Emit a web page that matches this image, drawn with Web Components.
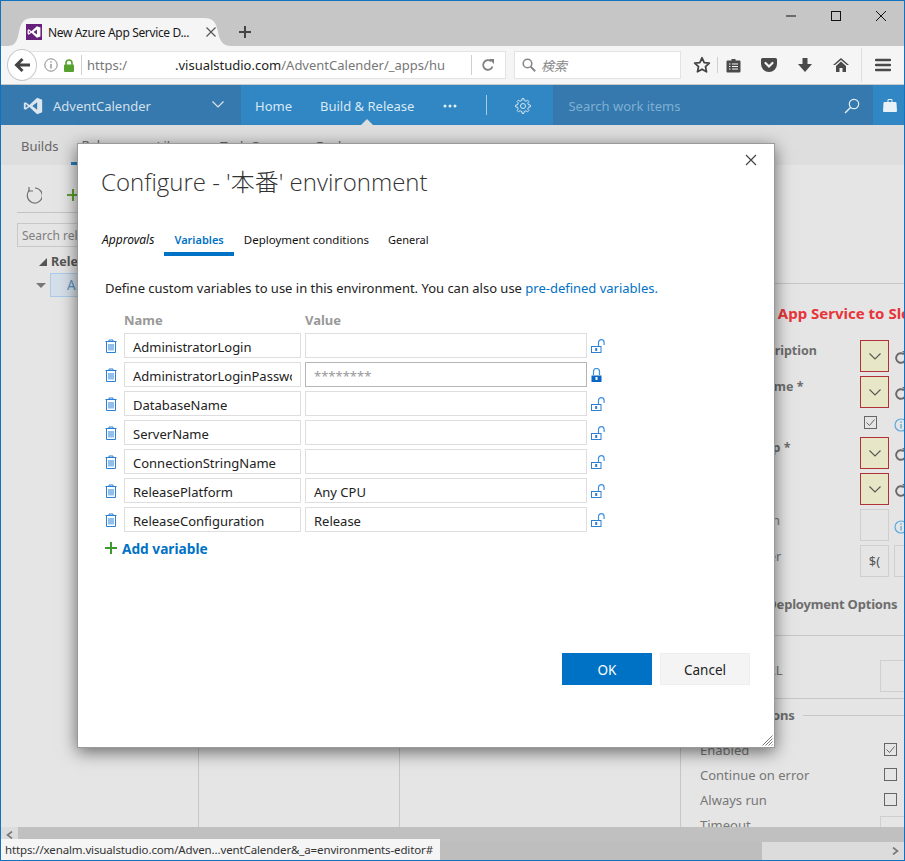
<!DOCTYPE html>
<html>
<head>
<meta charset="utf-8">
<title>Configure environment</title>
<style>
	html, body { margin: 0; padding: 0; overflow: hidden; }
	body { font-family: "Noto Sans", "Noto Sans CJK JP", sans-serif; }
</style>
</head>
<body>
<app-window>
	<browser-bar></browser-bar>
	<vsts-nav></vsts-nav>
	<vsts-subnav></vsts-subnav>
	<page-body></page-body>
	<page-scrollbars></page-scrollbars>
	<config-dialog>
		<var-row><span slot="name">AdministratorLogin</span></var-row>
		<var-row secret><span slot="name">AdministratorLoginPassword</span><span slot="value">********</span></var-row>
		<var-row><span slot="name">DatabaseName</span></var-row>
		<var-row><span slot="name">ServerName</span></var-row>
		<var-row><span slot="name">ConnectionStringName</span></var-row>
		<var-row><span slot="name">ReleasePlatform</span><span slot="value">Any CPU</span></var-row>
		<var-row><span slot="name">ReleaseConfiguration</span><span slot="value">Release</span></var-row>
	</config-dialog>
	<status-tip>https://xenalm.visualstudio.com/Adven...ventCalender&amp;_a=environments-editor#</status-tip>
</app-window>

<script>
const VS_LOGO = 'M17 2 7.6 10.8 3.2 7.4 1 8.5v7l2.2 1.1 4.4-3.4L17 22l6-2.4V4.4zM17 7.6v8.8L11.2 12zM3.2 9.7 6 12l-2.8 2.3z';

// outline of a cog, used for the settings button
function gearPath(cx, cy, outer, inner, teeth) {
	let d = '';
	const step = Math.PI * 2 / teeth;
	for (let i = 0; i < teeth; i++) {
		const a = i * step;
		const pts = [[inner, a - step * .5], [inner, a - step * .27], [outer, a - step * .17], [outer, a + step * .17], [inner, a + step * .27]];
		pts.forEach(([r, t], n) => {
			d += (i === 0 && n === 0 ? 'M' : 'L') + (cx + r * Math.cos(t)).toFixed(2) + ' ' + (cy + r * Math.sin(t)).toFixed(2);
		});
	}
	return d + 'Z';
}

class Shadowed extends HTMLElement {
	connectedCallback() {
		const shadow = this.attachShadow({ mode: 'open' });
		shadow.innerHTML = this.markup();
	}
}

class AppWindow extends Shadowed {
	markup() {
		return `
			<style>
				:host {
					display: flex; flex-direction: column; position: relative;
					width: 905px; height: 861px; box-sizing: border-box;
					border: 1px solid #1372bd; overflow: hidden; background: #e5e5e5;
					font-family: "Noto Sans", "Noto Sans CJK JP", sans-serif;
				}
			</style>
			<slot></slot>
		`;
	}
}

class BrowserBar extends Shadowed {
	markup() {
		return `
			<style>
				:host { display: block; flex: none; }
				.strip { height: 45px; background: #c6c6c6; display: flex; padding-left: 6px; box-sizing: border-box; }
				.tab { position: relative; width: 225px; height: 28px; margin-top: 17px; display: flex; align-items: center; padding-left: 19px; box-sizing: border-box; color: #1a1a1a; font-size: 12px; flex: none; }
				.tab > svg.shape { position: absolute; left: 0; top: 0; }
				.tab > * { position: relative; }
				.favicon { width: 16px; height: 16px; background: #68217a; display: flex; align-items: center; justify-content: center; margin-right: 6px; flex: none; }
				.title { width: 156px; white-space: nowrap; overflow: hidden; letter-spacing: -.35px; }
				.tab-x { margin-left: 1px; }
				.plus { margin: 17px 0 0 0; width: 26px; height: 28px; display: flex; align-items: center; justify-content: center; }
				.controls { margin-left: auto; margin-right: 1px; display: flex; height: 30px; }
				.controls div { width: 45px; display: flex; align-items: center; justify-content: center; }
				.tools { height: 39px; background: #f5f5f5; border-bottom: 1px solid #c9c9c9; box-sizing: border-box; display: flex; align-items: center; position: relative; color: #555; }
				.back { position: absolute; left: 6px; top: 3px; width: 30px; height: 32px; border-radius: 50%; border: 1px solid #c8c8c8; background: #fff; box-sizing: border-box; display: flex; align-items: center; justify-content: center; }
				.url { margin-left: 29px; width: 476px; height: 28px; flex: none; background: #fff; border: 1px solid #e3e3e3; box-sizing: border-box; display: flex; align-items: center; padding-left: 13px; font-size: 13px; color: #777; white-space: nowrap; }
				.url b { font-weight: 400; color: #222; margin-left: 48px; }
				.sep { width: 1px; height: 20px; background: #cfcfcf; flex: none; }
				.addr { margin-left: 5px; width: 358px; flex: none; overflow: hidden; }
				.search { margin-left: 8px; width: 167px; height: 28px; flex: none; background: #fff; border: 1px solid #e3e3e3; box-sizing: border-box; display: flex; align-items: center; padding-left: 7px; color: #888; font-size: 13px; font-style: italic; }
				.search span { margin-left: 5px; }
				.icons { display: flex; align-items: center; margin-left: 3px; flex: none; }
				.cell { width: 36px; display: flex; align-items: center; justify-content: center; flex: none; }
				.icons .sep { margin: 0 -3px; height: 16px; }
				.menu { margin-left: 2px; width: 42px; height: 34px; flex: none; display: flex; align-items: center; justify-content: center; border-left: 1px solid #dedede; box-sizing: border-box; }
			</style>
			<div class="strip">
				<div class="tab">
					<svg class="shape" width="225" height="28"><path d="M0 28c8 0 10-4 12-14S17 0 26 0h171c9 0 12 4 14 14s5 14 14 14z" fill="#f5f5f5"/></svg>
					<span class="favicon"><svg width="14" height="14" viewBox="0 0 24 24"><path fill="#fff" fill-rule="evenodd" d="${VS_LOGO}"/></svg></span>
					<span class="title">New Azure App Service D...</span>
					<svg class="tab-x" width="12" height="12" viewBox="0 0 12 12"><path d="M1.5 1.5l9 9m0-9l-9 9" stroke="#555" stroke-width="1.2" fill="none"/></svg>
				</div>
				<div class="plus"><svg width="14" height="14" viewBox="0 0 14 14"><path d="M7 1v12M1 7h12" stroke="#444" stroke-width="2" fill="none"/></svg></div>
				<div class="controls">
					<div><svg width="10" height="10" viewBox="0 0 10 10"><path d="M0 5h10" stroke="#111" fill="none"/></svg></div>
					<div><svg width="10" height="10" viewBox="0 0 10 10"><rect x=".5" y=".5" width="9" height="9" stroke="#111" fill="none"/></svg></div>
					<div><svg width="10" height="10" viewBox="0 0 10 10"><path d="M0 0l10 10M10 0L0 10" stroke="#111" fill="none"/></svg></div>
				</div>
			</div>
			<div class="tools">
				<div class="url">
					<svg width="14" height="14" viewBox="0 0 14 14" style="flex:none"><circle cx="7" cy="7" r="6.2" fill="none" stroke="#888"/><path d="M7 6v4.5M7 3.2v1.500" stroke="#888" stroke-width="1.3"/></svg>
					<svg width="12" height="13" viewBox="0 0 12 13" style="margin:0 6px 0 5px;flex:none"><path d="M3 6V4a3 3 0 0 1 6 0v2" fill="none" stroke="#57a12f" stroke-width="1.6"/><rect x="1" y="5.5" width="10" height="7.5" rx="1" fill="#57a12f"/></svg>
					<span class="sep"></span>
					<div class="addr">https:/<b>.visualstudio.com</b>/AdventCalender/_apps/hu</div>
					<span class="sep" style="margin-left:26px"></span>
					<svg width="14" height="14" viewBox="0 0 14 14" style="margin-left:9px;flex:none"><path d="M11.5 8.5A4.8 4.8 0 1 1 10 3.3" fill="none" stroke="#808080" stroke-width="1.8"/><path d="M8 1h5v5z" fill="#808080"/></svg>
				</div>
				<div class="back"><svg width="16" height="16" viewBox="0 0 16 16"><path d="M8.500 2L2.500 8l6 6M3 8h13" fill="none" stroke="#444" stroke-width="3"/></svg></div>
				<div class="search">
					<svg width="14" height="14" viewBox="0 0 14 14" style="flex:none"><circle cx="5.5" cy="5.5" r="4.3" fill="none" stroke="#888" stroke-width="1.6"/><path d="M8.7 8.7l4.5 4.5" stroke="#888" stroke-width="2"/></svg>
					<span>検索</span>
				</div>
				<div class="icons">
					<div class="cell"><svg width="18" height="18" viewBox="0 0 18 18"><path d="M9 1.8l2.2 4.8 5.1.6-3.8 3.500 1 5.100L9 13.2l-4.500 2.600 1-5.100-3.800-3.500 5.100-.6z" fill="none" stroke="#444" stroke-width="1.8" stroke-linejoin="round"/></svg></div>
					<span class="sep"></span>
					<div class="cell"><svg width="15" height="15" viewBox="0 0 15 15"><path d="M1.5 2.5h12a1 1 0 0 1 1 1v10a1 1 0 0 1-1 1h-12a1 1 0 0 1-1-1v-10a1 1 0 0 1 1-1zM5.500 2.500V1h4v1.500" fill="#4a4a4a"/><path d="M3 6h1.500M6 6h6M3 8.500h1.500M6 8.500h6M3 11h1.500M6 11h6" stroke="#f5f5f5" stroke-width="1.2"/></svg></div>
					<div class="cell"><svg width="16" height="14" viewBox="0 0 16 14"><path d="M1.500 0h13A1.500 1.500 0 0 1 16 1.500V6a8 8 0 0 1-16 0V1.500A1.500 1.500 0 0 1 1.500 0z" fill="#4a4a4a"/><path d="M4.500 5L8 8.500 11.500 5" fill="none" stroke="#f5f5f5" stroke-width="2.2" stroke-linecap="round"/></svg></div>
					<div class="cell"><svg width="14" height="14" viewBox="0 0 14 14"><path d="M4.500 0h5v6H14l-7 8-7-8h4.500z" fill="#4a4a4a"/></svg></div>
					<div class="cell"><svg width="16" height="14" viewBox="0 0 16 14"><path d="M8 0L0 7h2l6-5 6 5h2z" fill="#4a4a4a"/><path d="M3 8l5-4.500L13 8v6H9.500v-4h-3v4H3z" fill="#4a4a4a"/></svg></div>
				</div>
				<div class="menu"><svg width="16" height="14" viewBox="0 0 16 14"><path d="M1 2h14M1 7h14M1 12h14" stroke="#4a4a4a" stroke-width="2.4" stroke-linecap="round"/></svg></div>
			</div>
		`;
	}
}

class VstsNav extends Shadowed {
	markup() {
		return `
			<style>
				:host { display: flex; flex: none; height: 40px; background: #3087c3; color: #d9e8f3; font-size: 13px; align-items: stretch; }
				.brand { width: 240px; background: #3579ae; display: flex; align-items: center; padding: 2px 17px 0 22px; box-sizing: border-box; flex: none; }
				.brand span { margin-left: 10px; color: #d2e0ec; }
				.brand .chev { margin-left: auto; margin-top: -3px; }
				.item { display: flex; align-items: center; position: relative; white-space: nowrap; padding-top: 2px; flex: none; }
				.item.on::after { content: ""; position: absolute; left: 50%; bottom: 0; margin-left: -6px; border: 6px solid transparent; border-top: 0; border-bottom-color: #dedede; }
				.rule { width: 1px; height: 20px; background: #a3cbe6; align-self: center; margin-left: 29px; flex: none; }
				.searchbox { margin-left: 22px; width: 320px; flex: none; background: #3579ae; display: flex; align-items: center; padding: 2px 13px 0 15px; box-sizing: border-box; color: #7fb0d2; justify-content: space-between; }
				.bag { flex: 1; display: flex; align-items: center; justify-content: center; padding-left: 3px; }
			</style>
			<div class="brand">
				<svg width="20" height="20" viewBox="0 0 24 24"><path fill="#dbe6ef" fill-rule="evenodd" d="${VS_LOGO}"/></svg>
				<span>AdventCalender</span>
				<svg class="chev" width="12" height="7" viewBox="0 0 12 7"><path d="M.5.5L6 6 11.500.5" fill="none" stroke="#dbe6ef" stroke-width="1.2"/></svg>
			</div>
			<div class="item" style="margin-left:14px">Home</div>
			<div class="item on" style="margin-left:28px">Build &amp; Release</div>
			<div class="item" style="margin-left:29px"><svg width="14" height="4" viewBox="0 0 14 4"><circle cx="2" cy="2" r="1.5" fill="#e6f0f7"/><circle cx="7" cy="2" r="1.5" fill="#e6f0f7"/><circle cx="12" cy="2" r="1.5" fill="#e6f0f7"/></svg></div>
			<div class="rule"></div>
			<div class="item" style="margin-left:28px"><svg width="16" height="16" viewBox="0 0 16 16"><path d="${gearPath(8, 8, 7.4, 5.6, 8)}" fill="none" stroke="#d9e8f3"/><circle cx="8" cy="8" r="2.5" fill="none" stroke="#d9e8f3"/></svg></div>
			<div class="searchbox">
				<span>Search work items</span>
				<svg width="16" height="16" viewBox="0 0 16 16"><circle cx="10" cy="6" r="4.7" fill="none" stroke="#e3eef6" stroke-width="1.2"/><path d="M6.500 9.500L1 15" stroke="#e3eef6" stroke-width="1.4"/></svg>
			</div>
			<div class="bag"><svg width="14" height="14" viewBox="0 0 14 14"><path d="M1.500 4h11a1 1 0 0 1 1 1l.5 8a1 1 0 0 1-1 1H1a1 1 0 0 1-1-1l.5-8a1 1 0 0 1 1-1z" fill="#e8f1f7"/><path d="M5 4V1.500h4V4" fill="none" stroke="#e8f1f7"/></svg></div>
		`;
	}
}

class VstsSubnav extends Shadowed {
	markup() {
		return `
			<style>
				:host { display: flex; flex: none; height: 40px; background: #dedede; color: #666; font-size: 13px; padding-left: 20px; box-sizing: border-box; }
				div { display: flex; align-items: center; white-space: nowrap; height: 40px; box-sizing: border-box; padding-top: 2px; margin-right: 21px; flex: none; }
				.on { margin-left: -8px; padding: 2px 10px 0; border-bottom: 3px solid #2b7cbb; margin-right: 12px; }
			</style>
			<div>Builds</div>
			<div class="on">Releases</div>
			<div>Library</div>
			<div>Task Groups</div>
			<div>Explorer</div>
		`;
	}
}

class PageBody extends Shadowed {
	markup() {
		return `
			<style>
				:host { display: flex; flex: 1; min-height: 0; overflow: hidden; }
				.col { border-right: 1px solid #c6c6c6; box-sizing: border-box; flex: none; }
				.mid { width: 201px; }
				.mid2 { width: 281px; }
			</style>
			<release-tree></release-tree>
			<div class="col mid"></div>
			<div class="col mid2"></div>
			<task-form></task-form>
		`;
	}
}

class ReleaseTree extends Shadowed {
	markup() {
		return `
			<style>
				:host { display: block; width: 198px; flex: none; box-sizing: border-box; border-right: 1px solid #c6c6c6; padding-left: 16px; color: #666; font-size: 12.5px; }
				.bar { margin-right: 8px; border-bottom: 1px solid #c4c4c4; display: flex; align-items: center; padding: 12px 0 0 7px; box-sizing: border-box; height: 48px; }
				.find { margin: 10px 7px 0 0; height: 24px; border: 1px solid #c8c8c8; box-sizing: border-box; display: flex; align-items: center; padding-left: 4px; color: #808080; font-size: 12px; white-space: nowrap; overflow: hidden; }
				.head { margin-top: 4px; height: 20px; display: flex; align-items: center; font-weight: 700; color: #555; white-space: nowrap; padding-left: 22px; position: relative; }
				.head::before { content: ""; position: absolute; left: 23px; top: 7px; border: 4px solid transparent; border-right-color: #555; border-bottom-color: #555; margin-left: -1px; }
				.head span { margin-left: 12px; }
				.row { margin: 2px 7px 0 0; display: flex; align-items: center; height: 24px; position: relative; }
				.row i { border: 5px solid transparent; border-top: 5px solid #777; border-bottom: 0; margin-left: 19px; }
				.row div { margin-left: 4px; flex: 1; height: 24px; background: #d5dfe9; border: 1px solid #a9cbe9; box-sizing: border-box; padding-left: 16px; display: flex; align-items: center; color: #5b90c0; white-space: nowrap; font-size: 13.5px; }
			</style>
			<div class="bar">
				<svg width="18" height="18" viewBox="0 0 18 18"><path d="M5.500 4.200A7.500 7.500 0 1 0 11 2" fill="none" stroke="#6e6e6e" stroke-width="1.2"/><path d="M5 1v4h4" fill="none" stroke="#6e6e6e" stroke-width="1.2"/></svg>
				<svg width="12" height="12" viewBox="0 0 12 12" style="margin-left:25px"><path d="M6 0v12M0 6h12" stroke="#5aa02c" stroke-width="2"/></svg>
			</div>
			<div class="find">Search rele</div>
			<div class="head"><span>Rele</span></div>
			<div class="row"><i></i><div>A</div></div>
		`;
	}
}

class TaskForm extends Shadowed {
	chevBox() {
		return `<div class="pick"><svg width="12" height="7" viewBox="0 0 12 7"><path d="M.5.5L6 6 11.500.5" fill="none" stroke="#555" stroke-width="1.1"/></svg></div>`;
	}
	redo() {
		return `<svg class="side" width="14" height="14" viewBox="0 0 14 14" style="margin-top:11px"><path d="M11.500 8.500A4.800 4.800 0 1 1 10 3.300" fill="none" stroke="#6a6a6a" stroke-width="1.9"/><path d="M8 0h5v5z" fill="#6a6a6a"/></svg>`;
	}
	info(top) {
		return `<svg class="side" width="14" height="14" viewBox="0 0 14 14" style="margin-top:${top}px"><circle cx="7" cy="7" r="6" fill="none" stroke="#5aa9dc" stroke-width="1.2"/><path d="M7 6v4.500M7 3.300v1.500" stroke="#5aa9dc" stroke-width="1.3"/></svg>`;
	}
	markup() {
		const ticked = `<svg width="13" height="13" viewBox="0 0 13 13"><rect x=".5" y=".5" width="12" height="12" fill="none" stroke="#666"/><path d="M2.500 6.500l3 3 5-6" fill="none" stroke="#666"/></svg>`;
		return `
			<style>
				:host { display: block; flex: 1; min-width: 0; overflow: hidden; padding-top: 118px; color: #777; font-size: 13px; white-space: nowrap; }
				hr { border: 0; border-top: 1px solid #c6c6c6; margin: 0; }
				h2 { margin: 17px 0 15px 50px; font-size: 15px; line-height: 24px; color: #e8343a; font-weight: 700; }
				.grid { display: grid; grid-template-columns: 179px 29px 30px; grid-template-rows: 32px 32px 21px 32px 32px 32px 32px; row-gap: 4px; }
				.l { padding: 1px 0 0 19px; line-height: 20px; }
				.b { font-weight: 700; color: #6d6d6d; font-size: 12.5px; }
				.pick { box-sizing: border-box; height: 32px; background: #e7e7c7; border: 1px solid #b13236; display: flex; align-items: center; justify-content: center; }
				.empty { box-sizing: border-box; height: 32px; border: 1px solid #cfcfcf; display: flex; align-items: center; justify-content: center; color: #555; font-size: 13px; }
				.cellside { display: flex; padding-left: 5px; gap: 4px; }
				.check { margin-left: 4px; align-self: center; display: flex; }
				h3 { margin: 17px 0 0 18px; font-size: 13px; letter-spacing: -.2px; line-height: 20px; color: #6d6d6d; font-weight: 700; }
				.url { display: flex; margin-top: 24px; height: 32px; padding-left: 19px; }
				.url span { line-height: 20px; }
				.url div { margin-left: auto; width: 24px; box-sizing: border-box; border: 1px solid #cfcfcf; border-right: 0; }
				.ctrl { display: flex; align-items: center; margin-top: 6px; }
				.ctrl h3 { margin: 0 8px 0 14px; }
				.ctrl i { flex: 1; border-top: 1px solid #c6c6c6; }
				.opts { margin-top: 12px; display: flex; flex-direction: column; }
				.opt { display: flex; align-items: center; height: 25px; padding: 0 7px 0 19px; flex: none; justify-content: space-between; }
				.box { width: 13px; height: 13px; border: 1px solid #666; box-sizing: border-box; display: block; }
				.time div { width: 24px; height: 24px; margin-right: -7px; border: 1px solid #cfcfcf; border-right: 0; box-sizing: border-box; margin-top: 6px; }
			</style>
			<hr>
			<h2>Azure App Service to Slot</h2>
			<div class="grid">
				<div class="l b">Azure Subscription</div>${this.chevBox()}<div class="cellside">${this.redo()}</div>
				<div class="l b">Web App name *</div>${this.chevBox()}<div class="cellside">${this.redo()}</div>
				<div class="l">To slot</div>
				<div class="check">${ticked}</div>
				<div class="cellside">${this.info(6)}</div>
				<div class="l b">Server group *</div>${this.chevBox()}<div class="cellside">${this.redo()}</div>
				<div class="l b">Slot *</div>${this.chevBox()}<div class="cellside">${this.redo()}</div>
				<div class="l">Path location</div><div class="empty"></div><div class="cellside">${this.info(11)}</div>
				<div class="l">Source folder</div><div class="empty">$(</div><div class="cellside"><div class="empty" style="width:30px"></div></div>
			</div>
			<h3>Additional Deployment Options</h3>
			<hr style="margin-top:21px">
			<div class="url"><span>Web App URL</span><div></div></div>
			<hr style="margin-top:6px">
			<div class="ctrl"><h3>Control Options</h3><i></i></div>
			<div class="opts">
				<div class="opt"><span>Enabled</span>${ticked}</div>
				<div class="opt"><span>Continue on error</span><span class="box"></span></div>
				<div class="opt"><span>Always run</span><span class="box"></span></div>
				<div class="opt time"><span>Timeout</span><div></div></div>
			</div>
		`;
	}
}

class PageScrollbars extends Shadowed {
	markup() {
		return `
			<style>
				:host { display: block; flex: none; }
				.one { height: 15px; background: #c0c0c0; display: flex; }
				.arrow { width: 17px; background: #dcdcdc; display: flex; align-items: center; justify-content: center; }
				.two { height: 18px; background: #dcdcdc; display: flex; align-items: center; }
				.thumb { width: 761px; height: 100%; background: #bebebe; }
				.two svg { margin-left: auto; margin-right: 5px; }
			</style>
			<div class="one"><div class="arrow"><svg width="7" height="8" viewBox="0 0 7 8"><path d="M6 .5L1.500 4 6 7.500" fill="none" stroke="#777" stroke-width="1.6"/></svg></div></div>
			<div class="two"><div class="thumb"></div><svg width="7" height="8" viewBox="0 0 7 8"><path d="M1 .5L5.500 4 1 7.500" fill="none" stroke="#777" stroke-width="1.6"/></svg></div>
		`;
	}
}

class StatusTip extends Shadowed {
	markup() {
		return `
			<style>
				:host { position: absolute; left: 0; bottom: 0; width: 439px; height: 21px; background: #f5f5f5; color: #333; font-size: 11.5px; letter-spacing: -.13px; padding-left: 4px; box-sizing: border-box; display: flex; align-items: center; white-space: nowrap; overflow: hidden; }
			</style>
			<slot></slot>
		`;
	}
}

class ConfigDialog extends Shadowed {
	markup() {
		return `
			<style>
				:host {
					position: absolute; left: 76px; top: 142px; width: 698px; height: 605px;
					background: #fff; border: 1px solid #9a9a9a; box-sizing: border-box;
					box-shadow: 0 4px 16px rgba(0, 0, 0, .55);
					display: flex; flex-direction: column; color: #222;
				}
				.close { position: absolute; top: 10px; right: 17px; width: 12px; height: 12px; }
				h1 { margin: 20px 0 0 23px; font-size: 24px; line-height: 36px; font-weight: 300; color: #333; white-space: nowrap; font-family: "Open Sans", "Noto Sans CJK JP", sans-serif; }
				.tabs { display: flex; margin: 26px 0 0 14px; height: 30px; font-size: 11.5px; color: #111; }
				.tabs div { padding: 0 10px; height: 26px; line-height: 28px; white-space: nowrap; }
				.tabs .ap { font-style: italic; font-size: 12px; }
				.tabs .on { color: #0072c6; font-weight: 600; font-size: 11px; border-bottom: 4px solid #0072c6; }
				.tabs .ge { font-size: 11px; margin-left: -1px; }
				.body { padding-left: 27px; }
				.desc { margin: 22px 0 0; font-size: 13px; letter-spacing: -.01px; line-height: 20px; color: #222; white-space: nowrap; }
				.desc a { color: #0072c6; text-decoration: none; }
				.cols { display: grid; grid-template-columns: 19px 181px auto; margin-top: 14px; margin-bottom: 5px; line-height: 16px; font-size: 13px; font-weight: 700; color: #999; }
				.add { margin-top: 6px; display: flex; align-items: center; height: 20px; font-size: 13.7px; font-weight: 700; color: #0072c6; gap: 5px; }
				.foot { margin-top: auto; padding: 0 24px 62px 0; display: flex; justify-content: flex-end; gap: 8px; }
				.foot div { width: 90px; height: 32px; padding-top: 1px; display: flex; align-items: center; justify-content: center; font-size: 13.5px; box-sizing: border-box; }
				.ok { background: #0072c6; color: #fff; }
				.cancel { background: #f4f4f4; color: #222; border: 1px solid #eee; }
				.grip { position: absolute; right: 1px; bottom: 1px; }
			</style>
			<svg class="close" viewBox="0 0 12 12"><path d="M1 1l10 10M11 1L1 11" stroke="#444" stroke-width="1.2" fill="none"/></svg>
			<h1>Configure - '本番' environment</h1>
			<div class="tabs">
				<div class="ap">Approvals</div>
				<div class="on">Variables</div>
				<div>Deployment conditions</div>
				<div class="ge">General</div>
			</div>
			<div class="body">
				<p class="desc">Define custom variables to use in this environment. You can also use <a>pre-defined variables.</a></p>
				<div class="cols"><span></span><span>Name</span><span>Value</span></div>
				<slot></slot>
				<div class="add"><svg width="12" height="12" viewBox="0 0 12 12"><path d="M6 0v12M0 6h12" stroke="#3c9a2e" stroke-width="2"/></svg><span>Add variable</span></div>
			</div>
			<div class="foot">
				<div class="ok">OK</div>
				<div class="cancel">Cancel</div>
			</div>
			<svg class="grip" width="12" height="12" viewBox="0 0 12 12"><path d="M11.500 1.500l-10 10M11.500 4.500l-7 7M11.500 7.500l-4 4M11.500 10.500l-1 1" stroke="#777" fill="none"/></svg>
		`;
	}
}

class VarRow extends Shadowed {
	markup() {
		const secret = this.hasAttribute('secret');
		const lock = secret
			? `<svg width="11" height="14" viewBox="0 0 11 14"><path d="M2.500 7V3.500a3 3 0 0 1 6 0V7" fill="none" stroke="#3f8fdf" stroke-width="1.2"/><rect x=".5" y="7.500" width="10" height="6.500" fill="#0a66c2"/><path d="M5.500 9v3" stroke="#fff" stroke-width="2"/></svg>`
			: `<svg width="15" height="14" viewBox="0 0 15 14"><path d="M7.500 8V3.500a2.800 2.800 0 0 1 5.600 0V6" fill="none" stroke="#3f8fdf" stroke-width="1.2"/><rect x=".5" y="7.500" width="9.500" height="6" fill="#fff" stroke="#2f7fd0"/><path d="M5.200 9v3" stroke="#2f7fd0" stroke-width="2"/></svg>`;
		return `
			<style>
				:host { display: grid; grid-template-columns: 19px 177px 286px 20px; height: 25px; margin-bottom: 4px; align-items: center; color: #222; }
				.trash { display: flex; margin-top: 1px; }
				.field { box-sizing: border-box; height: 25px; border: 1px solid #dedede; padding: 2px 8px 0; display: flex; align-items: center; white-space: nowrap; font-size: 13px; background: #fff; }
				.clip { overflow: hidden; flex: 1; }
				.value { margin-left: 4px; width: 282px; }
				.value.secret { border-color: #b5b5b5; color: #999; }
				.lock { margin-left: 4px; display: flex; margin-top: 1px; }
			</style>
			<div class="trash"><svg width="12" height="14" viewBox="0 0 12 14"><path d="M.5 2.500h11M4 2.500V1h4v1.500M1.500 2.500v11h9v-11M4 5v6.500M6 5v6.500M8 5v6.500" fill="none" stroke="#2a7fd6"/></svg></div>
			<div class="field"><div class="clip"><slot name="name"></slot></div></div>
			<div class="field value ${secret ? 'secret' : ''}"><div class="clip"><slot name="value"></slot></div></div>
			<div class="lock">${lock}</div>
		`;
	}
}

customElements.define('app-window', AppWindow);
customElements.define('browser-bar', BrowserBar);
customElements.define('vsts-nav', VstsNav);
customElements.define('vsts-subnav', VstsSubnav);
customElements.define('page-body', PageBody);
customElements.define('release-tree', ReleaseTree);
customElements.define('task-form', TaskForm);
customElements.define('page-scrollbars', PageScrollbars);
customElements.define('status-tip', StatusTip);
customElements.define('config-dialog', ConfigDialog);
customElements.define('var-row', VarRow);
</script>
</body>
</html>
